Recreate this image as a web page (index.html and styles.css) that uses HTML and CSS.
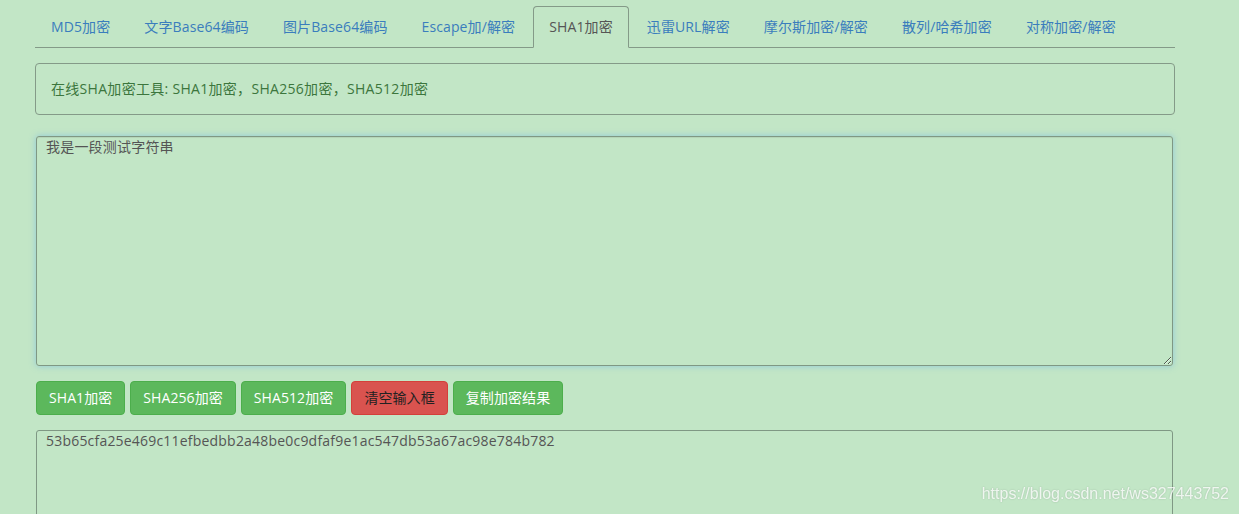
FILE: index.html
```html
<!DOCTYPE html>
<html lang="zh-CN">
<head>
    <meta charset="UTF-8">
    <meta name="viewport" content="width=device-width, initial-scale=1.0">
    <title>SHA1加密</title>
    <link rel="stylesheet" href="styles.css">
</head>
<body>
    <div class="container">
        <ul class="nav-tabs">
            <li><a href="#">MD5加密</a></li>
            <li><a href="#">文字Base64编码</a></li>
            <li><a href="#">图片Base64编码</a></li>
            <li><a href="#">Escape加/解密</a></li>
            <li class="active"><a href="#">SHA1加密</a></li>
            <li><a href="#">迅雷URL解密</a></li>
            <li><a href="#">摩尔斯加密/解密</a></li>
            <li><a href="#">散列/哈希加密</a></li>
            <li><a href="#">对称加密/解密</a></li>
        </ul>

        <div class="panel">在线SHA加密工具: SHA1加密，SHA256加密，SHA512加密</div>

        <textarea class="input-box focused">我是一段测试字符串</textarea>

        <div class="btn-row">
            <button class="btn btn-success">SHA1加密</button>
            <button class="btn btn-success">SHA256加密</button>
            <button class="btn btn-success">SHA512加密</button>
            <button class="btn btn-danger">清空输入框</button>
            <button class="btn btn-success">复制加密结果</button>
        </div>

        <textarea class="output-box">53b65cfa25e469c11efbedbb2a48be0c9dfaf9e1ac547db53a67ac98e784b782</textarea>
    </div>
    <div class="watermark">https://blog.csdn.net/ws327443752</div>
</body>
</html>
```

FILE: styles.css
```css
html {
    overflow: hidden;
}
body {
    margin: 0;
    padding: 6px 0 0 35px;
    background-color: #c2e6c6;
    font-family: "Open Sans", "Noto Sans CJK SC", sans-serif;
    font-size: 14px;
    line-height: 20px;
    letter-spacing: .12px;
    color: #333;
}
.container {
    width: 1140px;
}

.nav-tabs {
    display: flex;
    list-style: none;
    margin: 0;
    padding: 0;
    border-bottom: 1px solid #849a88;
}
.nav-tabs li {
    margin-right: 2px;
    margin-bottom: -1px;
}
.nav-tabs a {
    display: block;
    padding: 10px 15px;
    border: 1px solid transparent;
    border-radius: 4px 4px 0 0;
    color: #3a7dbd;
    text-decoration: none;
}
.nav-tabs .active a {
    color: #555;
    background-color: #c2e6c6;
    border-color: #849a88;
    border-bottom-color: transparent;
}

.panel {
    margin-top: 15px;
    padding: 15px;
    border: 1px solid #849a88;
    border-radius: 4px;
    letter-spacing: .3px;
    color: #3c763d;
}

.input-box,
.output-box {
    display: block;
    box-sizing: border-box;
    width: 1137px;
    margin-left: 1px;
    padding: 0 9px;
    background: transparent;
    border: 1px solid #7f9884;
    border-radius: 3px;
    font-family: "Open Sans", "Noto Sans CJK SC", sans-serif;
    font-size: 14px;
    line-height: 20px;
    letter-spacing: .2px;
    color: #555;
    outline: none;
}
.input-box {
    height: 230px;
    margin-top: 21px;
}
.input-box.focused {
    box-shadow: inset 0 1px 1px rgba(0, 0, 0, .075), 0 0 6px rgba(102, 175, 233, .55);
}
.output-box {
    height: 110px;
    margin-top: 15px;
    resize: none;
}

.btn-row {
    display: flex;
    gap: 5px;
    margin-top: 15px;
    margin-left: 1px;
}
.btn {
    padding: 6px 12px;
    font-family: "Open Sans", "Noto Sans CJK SC", sans-serif;
    font-size: 14px;
    line-height: 20px;
    letter-spacing: .08px;
    border: 1px solid transparent;
    border-radius: 4px;
    cursor: pointer;
}
.btn-success {
    background-color: #5cb85c;
    border-color: #4cae4c;
    color: #fff;
}
.btn-danger {
    background-color: #d9534f;
    border-color: #d43f3a;
    color: #222;
}

.watermark {
    position: fixed;
    right: 10px;
    bottom: 10px;
    font-family: "Liberation Sans", Arial, sans-serif;
    font-size: 16px;
    letter-spacing: 0;
    color: rgba(255, 255, 255, .8);
    text-shadow: 0 0 2px rgba(0, 0, 0, .2);
}
```
